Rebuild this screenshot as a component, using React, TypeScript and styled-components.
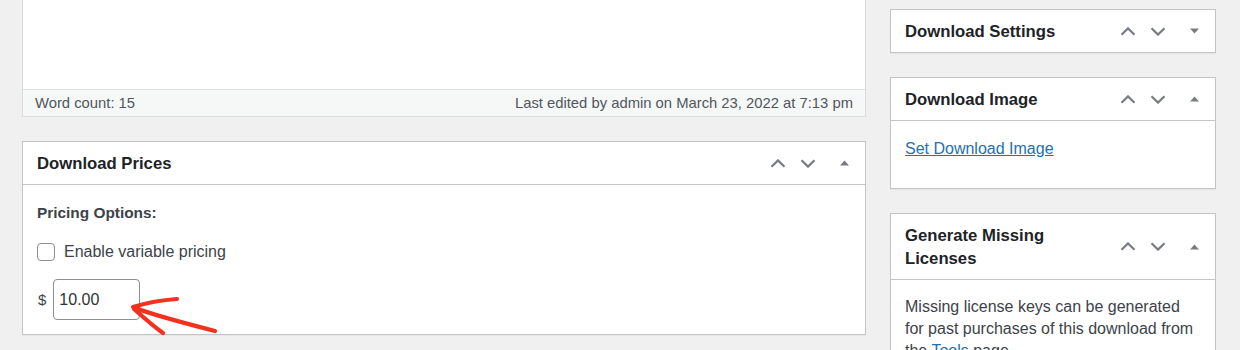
import styled, { createGlobalStyle } from "styled-components";
import type { ReactNode } from "react";

const GlobalStyle = createGlobalStyle`
  html, body {
    margin: 0;
    padding: 0;
    background: #f0f0f1;
    font-family: "Liberation Sans", Arial, sans-serif;
    color: #3c434a;
  }
`;

const Page = styled.div`
  display: grid;
  grid-template-columns: 844px 326px;
  column-gap: 24px;
  padding-left: 22px;
  height: 350px;
  overflow: hidden;
  box-sizing: border-box;
`;

const MainColumn = styled.div`
  display: flex;
  flex-direction: column;
`;

const SideColumn = styled.div`
  display: flex;
  flex-direction: column;
  gap: 24px;
  padding-top: 9px;
`;

const EditorArea = styled.div`
  height: 89px;
  background: #fff;
  border-left: 1px solid #dcdcde;
  border-right: 1px solid #dcdcde;
`;

const StatusBar = styled.div`
  display: flex;
  justify-content: space-between;
  align-items: center;
  height: 28px;
  box-sizing: border-box;
  padding: 0 12px;
  background: #f6f7f7;
  border: 1px solid #dcdcde;
  font-size: 14.8px;
  color: #50575e;
  margin-bottom: 24px;
`;

const Box = styled.div`
  background: #fff;
  border: 1px solid #c3c4c7;
  box-shadow: 0 1px 1px rgba(0, 0, 0, 0.04);
`;

const Header = styled.div<{ $collapsed?: boolean }>`
  display: flex;
  align-items: center;
  min-height: ${(p) => (p.$collapsed ? "41px" : "42px")};
  box-sizing: border-box;
  padding: 9.5px 0 9.5px 14px;
  border-bottom: ${(p) => (p.$collapsed ? "none" : "1px solid #c3c4c7")};
`;

const Title = styled.h2`
  flex: 1;
  margin: 0;
  font-size: 16.7px;
  line-height: 23px;
  font-weight: 700;
  color: #1d2327;
`;

const Handles = styled.div`
  display: flex;
  align-items: center;
  align-self: stretch;
  margin: -9.5px 0;
`;

const HandleButton = styled.button<{ $wide?: boolean }>`
  display: flex;
  align-items: center;
  justify-content: center;
  width: ${(p) => (p.$wide ? "42px" : "30px")};
  height: 100%;
  padding: 0;
  border: 0;
  background: none;
  color: #787c82;
  cursor: pointer;
`;

const Inside = styled.div<{ $pad: string }>`
  position: relative;
  padding: ${(p) => p.$pad};
  font-size: 16px;
  line-height: 22px;
`;

const Chevron = ({ up }: { up?: boolean }) => (
  <svg width="16" height="9" viewBox="0 0 16 9" fill="none">
    <polyline
      points={up ? "1.5,7.8 8,1.4 14.5,7.8" : "1.5,1.2 8,7.6 14.5,1.2"}
      stroke="currentColor"
      strokeWidth="2.2"
    />
  </svg>
);

const Caret = ({ up }: { up?: boolean }) => (
  <svg width="9" height="6" viewBox="0 0 9 6">
    <polygon points={up ? "0,5.5 4.5,0.5 9,5.5" : "0,0.5 9,0.5 4.5,5.5"} fill="currentColor" />
  </svg>
);

interface PostboxProps {
  title: string;
  collapsed?: boolean;
  pad?: string;
  children?: ReactNode;
}

const Postbox = ({ title, collapsed, pad = "0", children }: PostboxProps) => (
  <Box>
    <Header $collapsed={collapsed}>
      <Title>{title}</Title>
      <Handles>
        <HandleButton aria-label="Move up">
          <Chevron up />
        </HandleButton>
        <HandleButton aria-label="Move down">
          <Chevron />
        </HandleButton>
        <HandleButton $wide aria-label="Toggle panel">
          <Caret up={!collapsed} />
        </HandleButton>
      </Handles>
    </Header>
    {!collapsed && <Inside $pad={pad}>{children}</Inside>}
  </Box>
);

const FieldLabel = styled.div`
  font-size: 15.4px;
  font-weight: 700;
  color: #3c434a;
  margin-bottom: 17px;
`;

const CheckRow = styled.label`
  display: flex;
  align-items: center;
  gap: 9px;
  margin-bottom: 16px;
  color: #3c434a;
`;

const Checkbox = styled.span`
  width: 18px;
  height: 18px;
  box-sizing: border-box;
  border: 1px solid #8c8f94;
  border-radius: 4px;
  background: #fff;
`;

const PriceRow = styled.div`
  position: relative;
  display: flex;
  align-items: center;
`;

const Currency = styled.span`
  font-size: 15px;
  margin: 0 7px 0 1px;
  color: #3c434a;
`;

const PriceInput = styled.input`
  width: 87px;
  height: 41px;
  box-sizing: border-box;
  padding: 0 5px;
  border: 1px solid #8c8f94;
  border-radius: 4px;
  font-family: inherit;
  font-size: 16px;
  color: #2c3338;
  background: #fff;
  outline: none;
`;

const Arrow = styled.svg`
  position: absolute;
  left: 88px;
  top: 13px;
  overflow: visible;
`;

const Link = styled.a`
  color: #2271b1;
  text-decoration: underline;
  cursor: pointer;
`;

const Text = styled.p`
  margin: 0;
  color: #3c434a;
`;

export default function App() {
  return (
    <>
      <GlobalStyle />
      <Page>
        <MainColumn>
          <EditorArea />
          <StatusBar>
            <span>Word count: 15</span>
            <span>Last edited by admin on March 23, 2022 at 7:13 pm</span>
          </StatusBar>
          <Postbox title="Download Prices" pad="17px 14px 14px">
            <FieldLabel>Pricing Options:</FieldLabel>
            <CheckRow>
              <Checkbox />
              Enable variable pricing
            </CheckRow>
            <PriceRow>
              <Currency>$</Currency>
              <PriceInput defaultValue="10.00" />
              <Arrow width="100" height="50" viewBox="0 0 100 50" fill="none">
                <path
                  d="M52 7 C38 8, 21 11, 8 15 C24 22, 55 30, 90 39 M9 17 C18 25, 28 34, 38 41"
                  stroke="#f2311f"
                  strokeWidth="4.2"
                  strokeLinecap="round"
                  strokeLinejoin="round"
                />
              </Arrow>
            </PriceRow>
          </Postbox>
        </MainColumn>
        <SideColumn>
          <Postbox title="Download Settings" collapsed />
          <Postbox title="Download Image" pad="17px 14px 28px">
            <Link>Set Download Image</Link>
          </Postbox>
          <Postbox title="Generate Missing Licenses" pad="16px 14px 14px">
            <Text>
              Missing license keys can be generated for past purchases of this download from
              the <Link>Tools</Link> page.
            </Text>
          </Postbox>
        </SideColumn>
      </Page>
    </>
  );
}
